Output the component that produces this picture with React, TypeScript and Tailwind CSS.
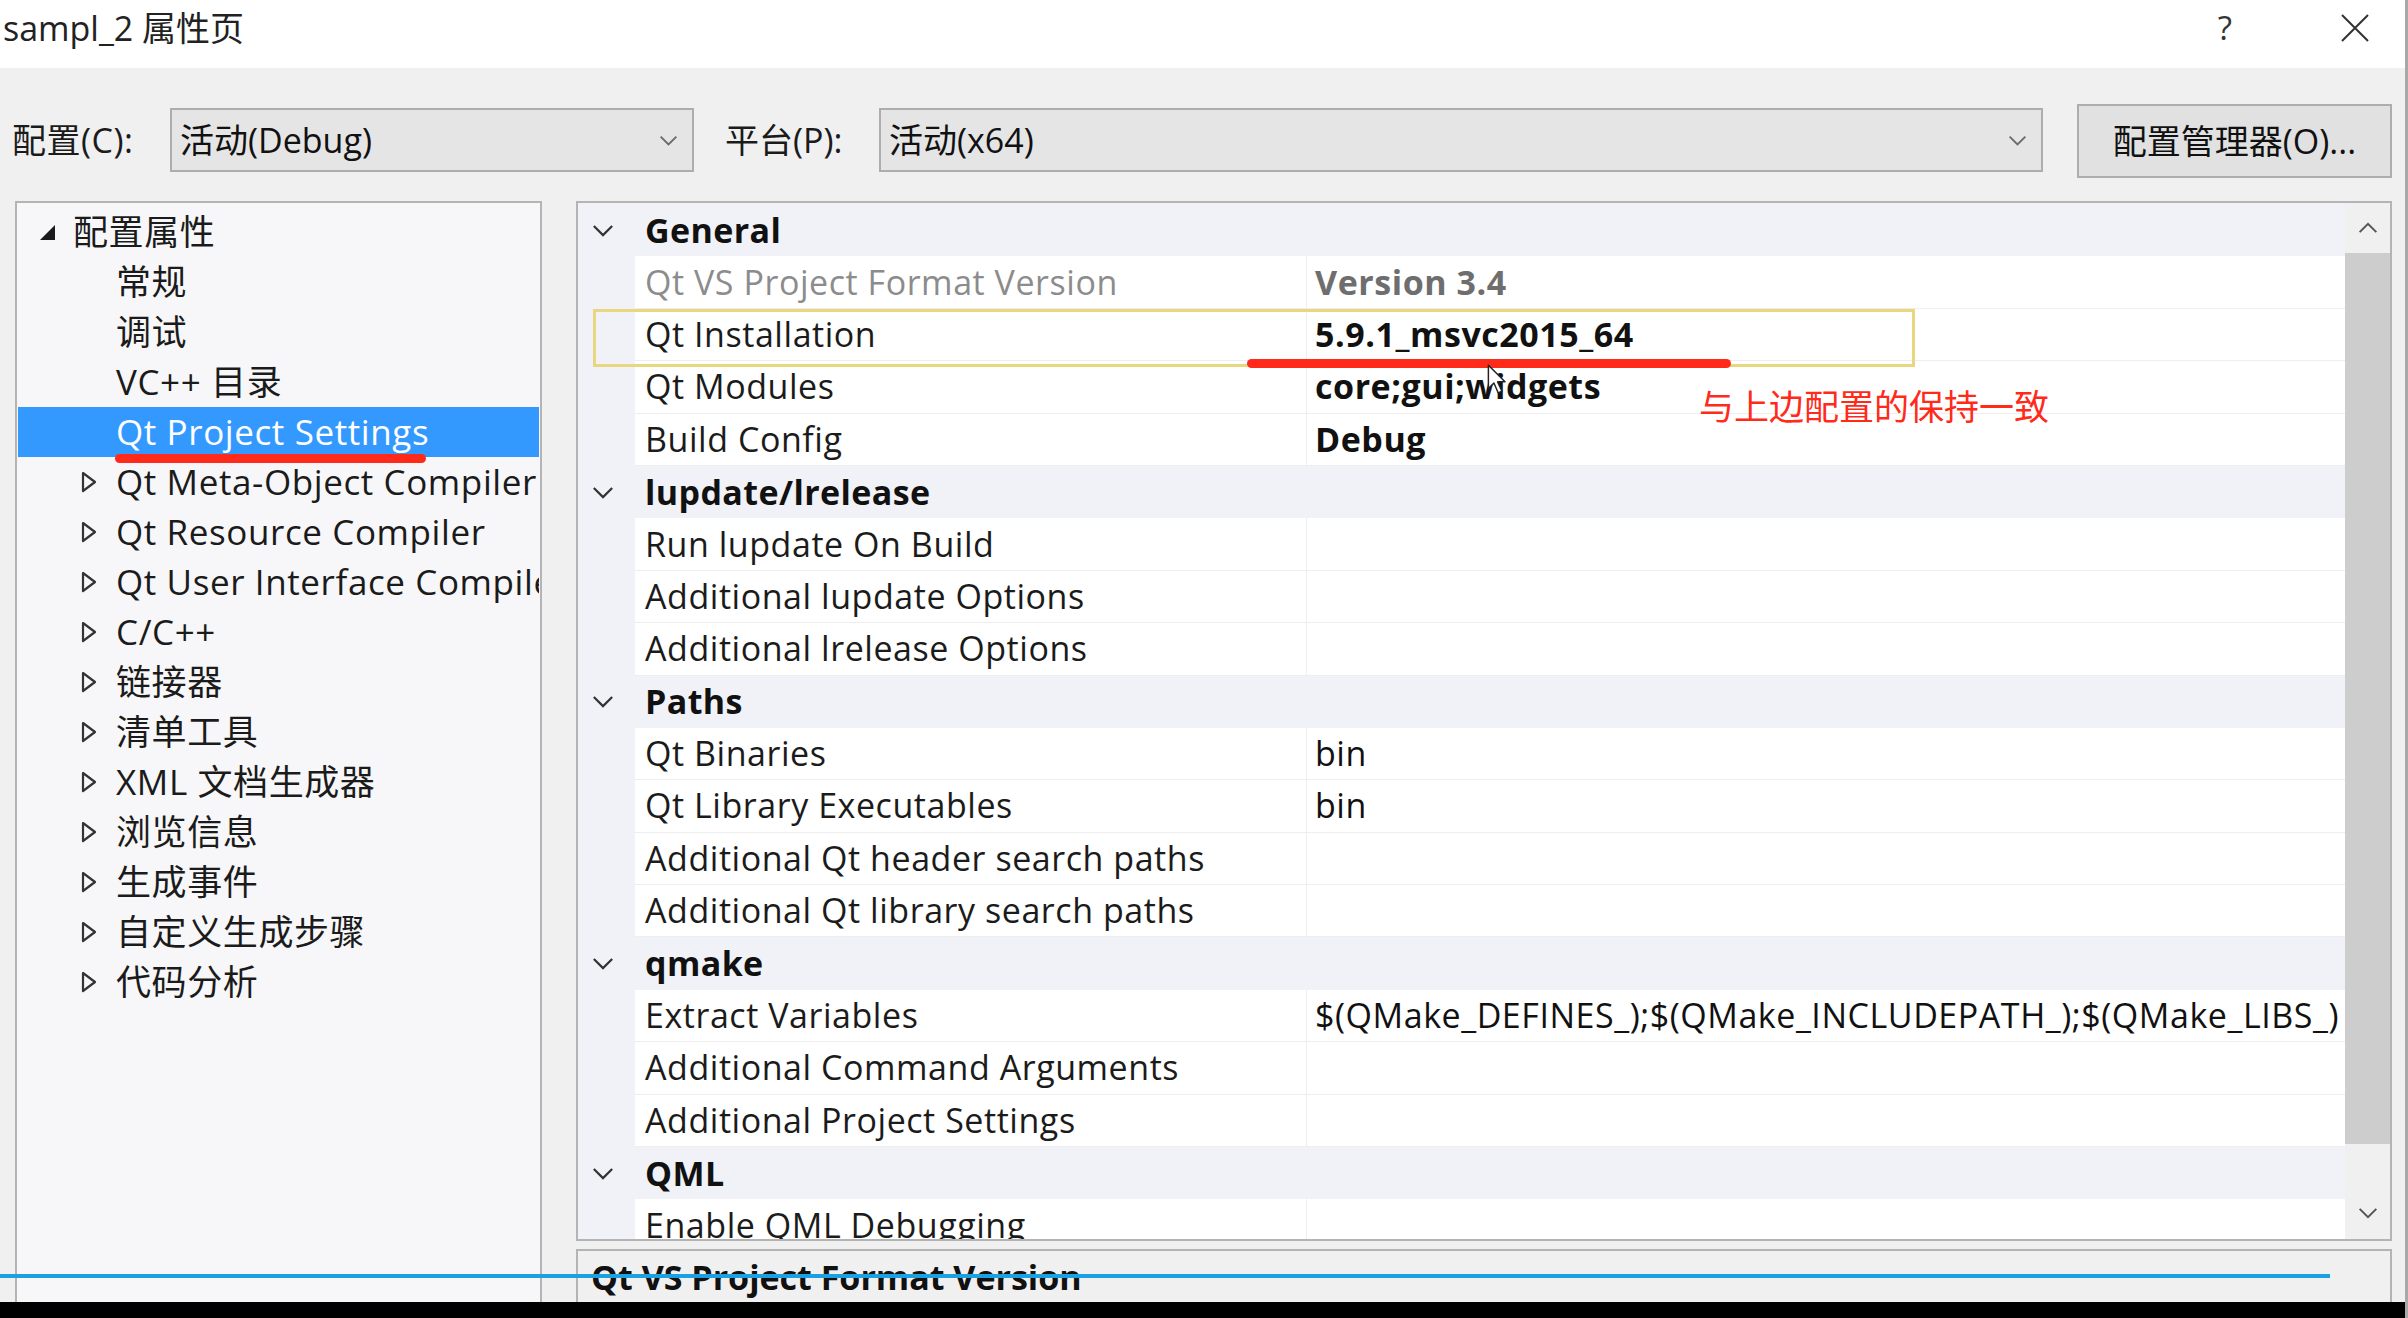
import React from 'react';

const FONT = "font-['Open_Sans','Noto_Sans_CJK_SC',sans-serif]";

type TreeItem = { label: string; level: 0 | 1; icon?: 'open' | 'closed'; selected?: boolean };

const tree: TreeItem[] = [
  { label: '配置属性', level: 0, icon: 'open' },
  { label: '常规', level: 1 },
  { label: '调试', level: 1 },
  { label: 'VC++ 目录', level: 1 },
  { label: 'Qt Project Settings', level: 1, selected: true },
  { label: 'Qt Meta-Object Compiler', level: 1, icon: 'closed' },
  { label: 'Qt Resource Compiler', level: 1, icon: 'closed' },
  { label: 'Qt User Interface Compiler', level: 1, icon: 'closed' },
  { label: 'C/C++', level: 1, icon: 'closed' },
  { label: '链接器', level: 1, icon: 'closed' },
  { label: '清单工具', level: 1, icon: 'closed' },
  { label: 'XML 文档生成器', level: 1, icon: 'closed' },
  { label: '浏览信息', level: 1, icon: 'closed' },
  { label: '生成事件', level: 1, icon: 'closed' },
  { label: '自定义生成步骤', level: 1, icon: 'closed' },
  { label: '代码分析', level: 1, icon: 'closed' },
];

type Row =
  | { kind: 'cat'; label: string }
  | { kind: 'prop'; label: string; value?: string; bold?: boolean; muted?: boolean };

const rows: Row[] = [
  { kind: 'cat', label: 'General' },
  { kind: 'prop', label: 'Qt VS Project Format Version', value: 'Version 3.4', bold: true, muted: true },
  { kind: 'prop', label: 'Qt Installation', value: '5.9.1_msvc2015_64', bold: true },
  { kind: 'prop', label: 'Qt Modules', value: 'core;gui;widgets', bold: true },
  { kind: 'prop', label: 'Build Config', value: 'Debug', bold: true },
  { kind: 'cat', label: 'lupdate/lrelease' },
  { kind: 'prop', label: 'Run lupdate On Build' },
  { kind: 'prop', label: 'Additional lupdate Options' },
  { kind: 'prop', label: 'Additional lrelease Options' },
  { kind: 'cat', label: 'Paths' },
  { kind: 'prop', label: 'Qt Binaries', value: 'bin' },
  { kind: 'prop', label: 'Qt Library Executables', value: 'bin' },
  { kind: 'prop', label: 'Additional Qt header search paths' },
  { kind: 'prop', label: 'Additional Qt library search paths' },
  { kind: 'cat', label: 'qmake' },
  { kind: 'prop', label: 'Extract Variables', value: '$(QMake_DEFINES_);$(QMake_INCLUDEPATH_);$(QMake_LIBS_)' },
  { kind: 'prop', label: 'Additional Command Arguments' },
  { kind: 'prop', label: 'Additional Project Settings' },
  { kind: 'cat', label: 'QML' },
  { kind: 'prop', label: 'Enable QML Debugging' },
];

function Chevron({ className, up }: { className?: string; up?: boolean }) {
  return (
    <svg viewBox="0 0 24 14" className={className} fill="none" stroke="currentColor" strokeWidth="2.4">
      {up ? <path d="M2 12 L12 2 L22 12" /> : <path d="M2 2 L12 12 L22 2" />}
    </svg>
  );
}

function TreeIcon({ kind }: { kind?: 'open' | 'closed' }) {
  if (kind === 'open')
    return (
      <svg viewBox="0 0 18 18" className="h-[18px] w-[18px] shrink-0">
        <polygon points="17,2 17,17 2,17" fill="#1a1a1a" />
      </svg>
    );
  if (kind === 'closed')
    return (
      <svg viewBox="0 0 16 22" className="h-[22px] w-[16px] shrink-0">
        <polygon points="2,2 14,11 2,20" fill="none" stroke="#333" strokeWidth="2.2" strokeLinejoin="round" />
      </svg>
    );
  return <span className="w-[16px] shrink-0" />;
}

function Combo({ text, width }: { text: string; width: string }) {
  return (
    <div
      className={`${width} flex h-[64px] items-center justify-between border-2 border-[#adadad] bg-[#e5e5e5] pl-[8px] pr-[14px] text-[34px] text-[#111]`}
    >
      <span>{text}</span>
      <Chevron className="h-[11px] w-[19px] text-[#6b6b6b]" />
    </div>
  );
}

export default function App() {
  return (
    <div className={`${FONT} relative h-[1318px] w-[2408px] overflow-hidden border-r-[3px] border-[#a8a8a8] bg-[#f0f0f0] text-[#1b1b1b]`}>
      {/* title bar */}
      <div className="flex h-[68px] items-center justify-between bg-white pb-[12px] pl-[3px]">
        <span className="text-[34px] text-[#222]">sampl_2 属性页</span>
        <div className="flex items-center">
          <span className="mr-[108px] text-[33px] text-[#333]">?</span>
          <svg viewBox="0 0 30 30" className="mr-[35px] h-[30px] w-[30px]" stroke="#333" strokeWidth="2">
            <path d="M2 2 L28 28 M28 2 L2 28" />
          </svg>
        </div>
      </div>

      {/* configuration row */}
      <div className="flex h-[133px] items-start pt-[40px] pl-[12px]">
        <span className="flex h-[64px] w-[158px] items-center text-[34px] tracking-[0.5px]">配置(C):</span>
        <Combo text="活动(Debug)" width="w-[524px]" />
        <span className="ml-[31px] flex h-[64px] w-[154px] items-center text-[34px]">平台(P):</span>
        <Combo text="活动(x64)" width="w-[1164px]" />
        <button className="-mt-[4px] ml-[34px] flex h-[74px] w-[315px] items-center justify-center border-2 border-[#adadad] bg-[#e1e1e1] text-[34px] text-[#111]">
          配置管理器(O)...
        </button>
      </div>

      {/* main area */}
      <div className="flex h-[1117px] pl-[15px]">
        {/* tree */}
        <div className="h-full w-[527px] overflow-hidden border-2 border-[#b4b4b4] bg-[#f7f7f9] pt-[4px]">
          {tree.map((t) => (
            <div
              key={t.label}
              className={`mx-px flex h-[50px] items-center overflow-hidden whitespace-nowrap text-[35px] tracking-[0.6px] ${
                t.selected ? 'bg-[#3399ff] text-white' : ''
              } ${t.level === 0 ? 'pl-[20px]' : 'pl-[63px]'}`}
            >
              <TreeIcon kind={t.icon} />
              <span className={t.level === 0 ? 'ml-[17px]' : 'ml-[19px]'}>{t.label}</span>
            </div>
          ))}
        </div>

        <div className="ml-[34px] flex w-[1816px] flex-col">
          {/* property grid */}
          <div className="flex h-[1040px] overflow-hidden border-2 border-[#b4b4b4] bg-[#f0f2f7]">
            <div className="flex-1 overflow-hidden pt-px">
              {rows.map((r) =>
                r.kind === 'cat' ? (
                  <div key={r.label} className="flex h-[52.4px] items-center bg-[#f0f2f7]">
                    <div className="flex w-[57px] justify-center pr-[8px]">
                      <Chevron className="h-[13px] w-[22px] text-[#333]" />
                    </div>
                    <span className="pl-[10px] text-[34px] font-bold tracking-[0.4px] text-[#111]">{r.label}</span>
                  </div>
                ) : (
                  <div key={r.label} className="flex h-[52.4px] items-stretch">
                    <div className="w-[57px] bg-[#f0f2f7]" />
                    <div
                      className={`flex w-[671px] items-center border-b border-[#eeeeee] bg-white pl-[10px] text-[34px] tracking-[0.55px] ${
                        r.muted ? 'text-[#8c8c8c]' : 'text-[#1b1b1b]'
                      }`}
                    >
                      {r.label}
                    </div>
                    <div
                      className={`flex flex-1 items-center overflow-hidden whitespace-nowrap border-b border-l border-[#eeeeee] bg-white pl-[8px] text-[34px] tracking-[0.55px] ${
                        r.bold ? 'font-bold' : ''
                      } ${r.muted ? 'text-[#6e6e6e]' : 'text-[#111]'}`}
                    >
                      {r.value}
                    </div>
                  </div>
                ),
              )}
            </div>
            {/* scrollbar */}
            <div className="flex w-[45px] flex-col bg-[#f0f0f0]">
              <div className="flex h-[50px] items-center justify-center">
                <Chevron up className="h-[12px] w-[20px] text-[#555]" />
              </div>
              <div className="h-[891px] bg-[#cdcdcd]" />
              <div className="flex-1" />
              <div className="flex h-[52px] items-center justify-center">
                <Chevron className="h-[12px] w-[20px] text-[#555]" />
              </div>
            </div>
          </div>

          {/* description */}
          <div className="mt-[8px] flex-1 border-2 border-b-0 border-[#b4b4b4] bg-[#f0f0f0] pl-[13px] pt-px">
            <span className="text-[34px] font-bold text-[#111]">Qt VS Project Format Version</span>
          </div>
        </div>
      </div>

      {/* selected property outline */}
      <div className="absolute left-[593px] top-[309px] h-[58px] w-[1322px] border-[3px] border-[#e8d77e]" />

      {/* annotations */}
      <div className="absolute left-[115px] top-[454px] h-[9px] w-[311px] rounded-full bg-[#ff2a1a]" />
      <div className="absolute left-[1247px] top-[359px] h-[9px] w-[484px] rounded-full bg-[#ff2a1a]" />
      <span className="absolute left-[1699px] top-[385px] text-[35px] leading-[44px] text-[#ff2a1a]">与上边配置的保持一致</span>

      {/* mouse cursor */}
      <svg viewBox="0 0 16 26" className="absolute left-[1487px] top-[364px] h-[32px] w-[20px]">
        <path d="M1 1 L1 20 L5.5 15.5 L9 23.5 L12 22 L8.5 14.5 L14.5 14.5 Z" fill="white" stroke="#222" strokeWidth="1.2" strokeLinejoin="round" />
      </svg>

      {/* video player overlay */}
      <div className="absolute left-0 top-[1274px] h-[4px] w-[2330px] bg-[#1ba1e2]" />
      <div className="absolute bottom-0 left-0 h-[16px] w-full bg-black" />
    </div>
  );
}
